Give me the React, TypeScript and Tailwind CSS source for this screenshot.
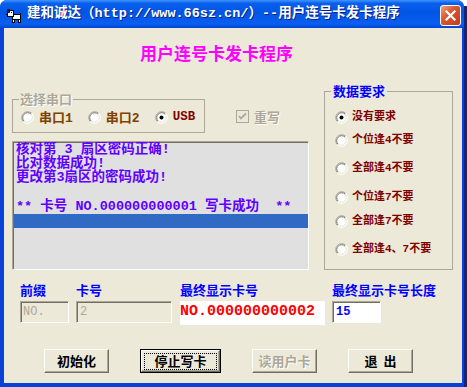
import React from 'react'

const MONO = "font-['Liberation_Mono','Noto_Sans_CJK_SC',monospace]"

function Radio({ checked = false }: { checked?: boolean }) {
  return (
    <svg width="13" height="13" viewBox="0 0 13 13" className="shrink-0">
      <circle cx="6.5" cy="6.5" r="6" fill="#fff" />
      <path d="M2.26 10.74 A6 6 0 0 1 10.74 2.26" fill="none" stroke="#ACA899" />
      <path d="M2.97 10.03 A5 5 0 0 1 10.03 2.97" fill="none" stroke="#716F64" />
      <path d="M10.74 2.26 A6 6 0 0 1 2.26 10.74" fill="none" stroke="#FFFFFF" />
      <path d="M10.03 2.97 A5 5 0 0 1 2.97 10.03" fill="none" stroke="#E2DFD0" />
      {checked && <circle cx="6.5" cy="6.5" r="2" fill="#000" />}
    </svg>
  )
}

function DisabledCheck() {
  return (
    <svg width="13" height="13" viewBox="0 0 13 13" className="shrink-0" shapeRendering="crispEdges">
      <rect x="0.5" y="0.5" width="12" height="12" fill="#ECE9D8" stroke="#ACA899" />
      <path d="M3 6 L5 8.5 L10 3.5" fill="none" stroke="#ACA899" strokeWidth="1.8" shapeRendering="auto" />
    </svg>
  )
}

function DogIcon() {
  return (
    <svg width="16" height="16" viewBox="0 0 16 16" shapeRendering="crispEdges" className="shrink-0">
      <rect x="6" y="7" width="8" height="5" fill="#fff" stroke="#000" />
      <rect x="1" y="3" width="6" height="6" fill="#fff" stroke="#000" />
      <rect x="1" y="2" width="3" height="4" fill="#222" />
      <rect x="5" y="5" width="1" height="1" fill="#000" />
      <rect x="0" y="7" width="2" height="1" fill="#000" />
      <rect x="6" y="12" width="2" height="3" fill="#fff" stroke="#000" />
      <rect x="12" y="12" width="2" height="3" fill="#fff" stroke="#000" />
      <rect x="14" y="6" width="1" height="3" fill="#000" />
    </svg>
  )
}

function TitleBar() {
  return (
    <div className="flex h-[28px] shrink-0 items-start bg-[linear-gradient(180deg,#3D95FF_0%,#0A5EEC_12%,#0055E5_45%,#0A5FF0_85%,#0046CF_100%)]">
      <div className="mt-[7px] ml-[6px]">
        <DogIcon />
      </div>
      <span
        className={`mt-[6px] ml-[5px] text-[13.5px] leading-[16px] font-bold text-white [text-shadow:1px_1px_0_#0A1E8A] ${MONO}`}
      >
        建和诚达（http://www.66sz.cn/）--用户连号卡发卡程序
      </span>
      <button
        type="button"
        className="mt-[5px] mr-[3px] ml-auto flex h-[21px] w-[21px] items-center justify-center rounded-[3px] border border-white bg-[linear-gradient(135deg,#F0A081_0%,#DA5832_40%,#C23A1B_100%)]"
        aria-label="关闭"
      >
        <svg width="13" height="13" viewBox="0 0 13 13">
          <path d="M2.5 2.5 L10.5 10.5 M10.5 2.5 L2.5 10.5" stroke="#fff" strokeWidth="2.2" strokeLinecap="square" />
        </svg>
      </button>
    </div>
  )
}

const RIGHT_OPTIONS = [
  { label: '没有要求', mt: 'mt-[13px]', checked: true },
  { label: '个位逢4不要', mt: 'mt-[10px]' },
  { label: '全部逢4不要', mt: 'mt-[15px]' },
  { label: '个位逢7不要', mt: 'mt-[16px]' },
  { label: '全部逢7不要', mt: 'mt-[11px]' },
  { label: '全部逢4、7不要', mt: 'mt-[15px]' },
]

const LOG_LINES = ['核对第 3 扇区密码正确!', '比对数据成功!', '更改第3扇区的密码成功!', '', '** 卡号 NO.000000000001 写卡成功  **']

function Button({
  children,
  focused = false,
  disabled = false,
  className = '',
}: {
  children: React.ReactNode
  focused?: boolean
  disabled?: boolean
  className?: string
}) {
  return (
    <div className={`h-[24px] shrink-0 ${focused ? 'border border-black' : ''} ${className}`}>
      <div className="flex h-full w-full items-center justify-center border-t border-l border-t-white border-l-white border-r border-b border-r-[#716F64] border-b-[#716F64] bg-[#ECE9D8] shadow-[inset_-1px_-1px_0_#ACA899]">
        <div
          className={`flex items-center justify-center whitespace-pre text-[13px] leading-[14px] font-bold ${
            disabled ? 'text-[#ACA899] [text-shadow:1px_1px_0_#fff]' : 'text-black'
          } ${focused ? 'h-[15px] w-[71px] outline-1 outline-dotted outline-black' : ''}`}
        >
          {children}
        </div>
      </div>
    </div>
  )
}

export default function App() {
  return (
    <div className="flex h-[387px] w-[467px] overflow-hidden bg-white font-['Noto_Sans_CJK_SC',sans-serif]">
      <div className="flex w-[464px] shrink-0 flex-col overflow-hidden rounded-t-[7px] bg-[#0842D8]">
        <TitleBar />

        <div className="mb-[4px] ml-[4px] mr-[2px] flex flex-1 flex-col bg-[#ECE9D8]">
          {/* 标题 */}
          <h1 className="mt-[16px] pl-[136px] text-[17px] leading-[18px] font-bold text-[#FF00FF]">
            用户连号卡发卡程序
          </h1>

          {/* 主区域 */}
          <div className="mt-[22px] ml-[8px] flex items-start gap-[15px]">
            <div className="flex w-[297px] flex-col">
              <div className="mt-[8px] flex items-start">
                <fieldset className="h-[41px] w-[193px] border border-[#ACA899]">
                  <legend className="ml-[6px] px-[1px] text-[13px] leading-[14px] font-bold text-[#ACA899] [text-shadow:1px_1px_0_#fff]">
                    选择串口
                  </legend>
                  <div className="mt-[4px] ml-[8px] flex items-center">
                    <Radio />
                    <span className="ml-[5px] text-[13px] leading-[13px] font-bold text-[#804000]">
                      串口<span className={MONO}>1</span>
                    </span>
                    <div className="ml-[15px]">
                      <Radio />
                    </div>
                    <span className="ml-[5px] text-[13px] leading-[13px] font-bold text-[#804000]">
                      串口<span className={MONO}>2</span>
                    </span>
                    <div className="ml-[15px]">
                      <Radio checked />
                    </div>
                    <span className={`ml-[5px] text-[12.5px] leading-[13px] font-bold text-[#800000] ${MONO}`}>
                      USB
                    </span>
                  </div>
                </fieldset>
                <div className="mt-[18px] ml-[31px] flex items-center">
                  <DisabledCheck />
                  <span className="ml-[5px] text-[13px] leading-[13px] font-bold text-[#ACA899] [text-shadow:1px_1px_0_#fff]">
                    重写
                  </span>
                </div>
              </div>

              {/* 列表 */}
              <div
                className={`mt-[8px] h-[129px] overflow-hidden border border-t-[#ACA899] border-l-[#ACA899] border-r-white border-b-white bg-[#E0E0E0] pt-[1px] shadow-[inset_1px_1px_0_#716F64] text-[13.5px] font-bold text-[#6000FF] ${MONO}`}
              >
                {LOG_LINES.map((line, i) => (
                  <div key={i} className="h-[14.2px] pl-[3px] leading-[14.2px] whitespace-pre">
                    {line}
                  </div>
                ))}
                <div className="ml-[1px] h-[14px] bg-[#316AC5]" />
              </div>
            </div>

            {/* 数据要求 */}
            <fieldset className="h-[186px] w-[129px] border border-[#ACA899]">
              <legend className="ml-[6px] px-[2px] text-[13px] leading-[14px] font-bold text-[#0000FF]">
                数据要求
              </legend>
              <div className="flex flex-col pl-[10px]">
                {RIGHT_OPTIONS.map((o) => (
                  <div key={o.label} className={`flex items-center ${o.mt}`}>
                    <Radio checked={o.checked} />
                    <span className={`ml-[4px] text-[11px] leading-[13px] font-bold text-[#800000] ${MONO}`}>
                      {o.label}
                    </span>
                  </div>
                ))}
              </div>
            </fieldset>
          </div>

          {/* 卡号区域 */}
          <div className="mt-[13px] ml-[16px] flex items-start text-[13px] leading-[14px] font-bold text-[#0000FF]">
            <div className="flex w-[49px] flex-col">
              <span>前缀</span>
              <div className={`mt-[4px] h-[22px] border border-t-[#ACA899] border-l-[#ACA899] border-r-white border-b-white bg-[#ECE9D8] pl-[2px] shadow-[inset_1px_1px_0_#716F64] text-[12px] leading-[20px] font-normal text-[#ACA899] ${MONO}`}>
                NO.
              </div>
            </div>
            <div className="ml-[7px] flex w-[96px] flex-col">
              <span>卡号</span>
              <div className={`mt-[4px] h-[22px] border border-t-[#ACA899] border-l-[#ACA899] border-r-white border-b-white bg-[#ECE9D8] pl-[3px] shadow-[inset_1px_1px_0_#716F64] text-[12px] leading-[20px] font-normal text-[#ACA899] ${MONO}`}>
                2
              </div>
            </div>
            <div className="ml-[8px] flex w-[145px] flex-col">
              <span>最终显示卡号</span>
              <div className={`mt-[4px] h-[24px] bg-white text-[15px] leading-[22px] font-bold text-[#FF0000] ${MONO}`}>
                NO.000000000002
              </div>
            </div>
            <div className="ml-[7px] flex flex-col">
              <span>最终显示卡号长度</span>
              <div className={`mt-[4px] h-[22px] w-[49px] border border-t-[#ACA899] border-l-[#ACA899] border-r-white border-b-white bg-white pl-[3px] shadow-[inset_1px_1px_0_#716F64] text-[12px] leading-[20px] font-bold text-[#0000FF] ${MONO}`}>
                15
              </div>
            </div>
          </div>

          {/* 按钮 */}
          <div className="mt-[24px] ml-[40px] flex items-start gap-[31px]">
            <Button className="w-[65px]">初始化</Button>
            <Button className="w-[81px]" focused>
              停止写卡
            </Button>
            <Button className="w-[65px]" disabled>
              读用户卡
            </Button>
            <Button className="w-[65px]">退  出</Button>
          </div>
        </div>
      </div>
      <div className="mt-[6px] w-[3px] bg-[#16257A]" />
    </div>
  )
}
